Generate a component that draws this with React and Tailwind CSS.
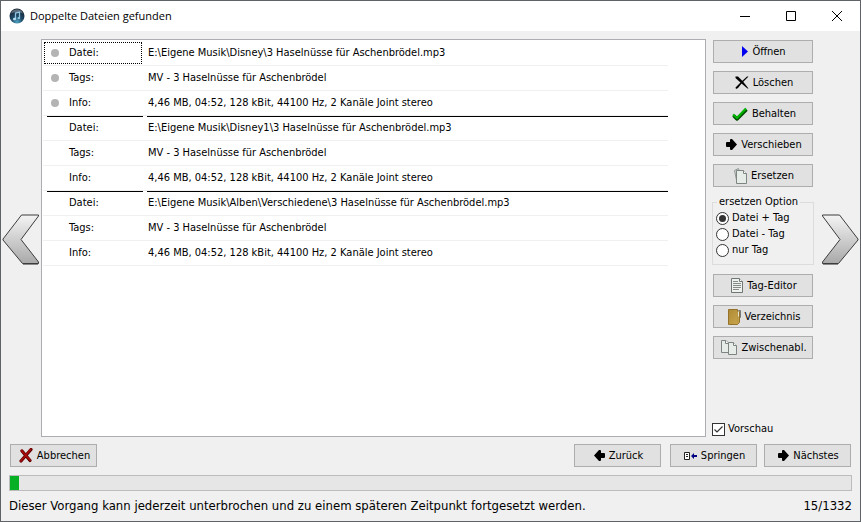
import { useState } from 'react';
import clsx from 'clsx';

const FILES = [
  {
    datei: 'E:\\Eigene Musik\\Disney\\3 Haselnüsse für Aschenbrödel.mp3',
    tags: 'MV - 3 Haselnüsse für Aschenbrödel',
    info: '4,46 MB, 04:52, 128 kBit, 44100 Hz, 2 Kanäle Joint stereo'
  },
  {
    datei: 'E:\\Eigene Musik\\Disney1\\3 Haselnüsse für Aschenbrödel.mp3',
    tags: 'MV - 3 Haselnüsse für Aschenbrödel',
    info: '4,46 MB, 04:52, 128 kBit, 44100 Hz, 2 Kanäle Joint stereo'
  },
  {
    datei: 'E:\\Eigene Musik\\Alben\\Verschiedene\\3 Haselnüsse für Aschenbrödel.mp3',
    tags: 'MV - 3 Haselnüsse für Aschenbrödel',
    info: '4,46 MB, 04:52, 128 kBit, 44100 Hz, 2 Kanäle Joint stereo'
  }
];

const FIELDS = [
  { key: 'datei', label: 'Datei:' },
  { key: 'tags', label: 'Tags:' },
  { key: 'info', label: 'Info:' }
];

const OPTIONS = ['Datei + Tag', 'Datei - Tag', 'nur Tag'];

const CURRENT = 15;
const TOTAL = 1332;

function AppIcon() {
  return (
    <svg width="16" height="16" viewBox="0 0 16 16" aria-hidden="true">
      <defs>
        <radialGradient id="orb" cx="0.5" cy="0.9" r="0.85">
          <stop offset="0" stopColor="#4fa3c4" />
          <stop offset="0.45" stopColor="#1f4a66" />
          <stop offset="1" stopColor="#16202e" />
        </radialGradient>
      </defs>
      <circle cx="8" cy="8" r="7.5" fill="url(#orb)" />
      <path d="M2 5.500C3 2.500 5.500 1.200 8 1.200s5 1.300 6 4.300C11 3.800 5 3.800 2 5.500z" fill="#8a97a5" opacity="0.6" />
      <path d="M6.500 11V5l4-1v6" fill="none" stroke="#8fc4e0" strokeWidth="1.300" />
      <ellipse cx="5.500" cy="11" rx="1.500" ry="1.200" fill="#b9ddf2" />
      <ellipse cx="9.800" cy="10.200" rx="1.300" ry="1.100" fill="#8fc4e0" />
    </svg>
  );
}

function PlayIcon() {
  return (
    <svg width="6" height="11" viewBox="0 0 6 11" aria-hidden="true">
      <path d="M0 0L6 5.500L0 11z" fill="#0000f0" />
    </svg>
  );
}

function CrossIcon() {
  return (
    <svg width="14" height="13" viewBox="0 0 14 13" aria-hidden="true">
      <path d="M0.500 0.500L3 0.500L8 5.500L13.500 12.500L12.500 12.500L6.500 7.500L0.500 2z" fill="#000" />
      <path d="M13.500 0.500L12 0.500L6 6L0.500 11.500L1 13L3 12L7 7z" fill="#000" />
    </svg>
  );
}

function TickIcon() {
  return (
    <svg width="16" height="14" viewBox="0 0 16 14" aria-hidden="true">
      <path d="M1.500 8.500L5 12L14.500 2.500" fill="none" stroke="#004a00" strokeWidth="3.400" strokeLinejoin="round" />
      <path d="M1 7.500L5 11L14 1.500" fill="none" stroke="#00b400" strokeWidth="2.200" strokeLinejoin="round" />
    </svg>
  );
}

function ArrowIcon({ flip }) {
  return (
    <svg width="11" height="11" viewBox="0 0 11 11" className={clsx(flip && '-scale-x-100')} aria-hidden="true">
      <path d="M0 4Q0 3 1 3H4V1Q4 0 5 0H6L11 5.500L6 11H5Q4 11 4 10V8H1Q0 8 0 7z" fill="#000" />
    </svg>
  );
}

function PagesIcon() {
  return (
    <svg width="13" height="16" viewBox="0 0 13 16" aria-hidden="true">
      <path d="M0.500 2.500L4.500 0.500L8 12L3 14.500z" fill="#d5dad6" stroke="#8f9693" />
      <path d="M2.500 2.500H9.500L12.500 5.500V15.500H2.500z" fill="#e6ece8" stroke="#7d8481" />
      <path d="M9.500 2.500V5.500H12.500" fill="#fff" stroke="#7d8481" />
    </svg>
  );
}

function DocumentIcon() {
  return (
    <svg width="12" height="15" viewBox="0 0 12 15" aria-hidden="true">
      <path d="M0.500 0.500H8.500L11.500 3.500V14.500H0.500z" fill="#eef1ee" stroke="#6f7673" />
      <path d="M8.500 0.500V3.500H11.500" fill="#fff" stroke="#6f7673" />
      <path d="M2 3.500H7M2 5.500H10M2 7.500H10M2 9.500H10M2 11.500H8" stroke="#858c88" />
    </svg>
  );
}

function FolderIcon() {
  return (
    <svg width="13" height="16" viewBox="0 0 13 16" aria-hidden="true">
      <defs>
        <linearGradient id="folder" x1="0" y1="0" x2="1" y2="1">
          <stop offset="0" stopColor="#b08a34" />
          <stop offset="1" stopColor="#c9a750" />
        </linearGradient>
      </defs>
      <path d="M10.500 1.500H12.500V8.500L10.500 10.500z" fill="#dcdcd6" stroke="#777" />
      <path d="M0.500 0.500H9.500V2.500H11.500V13.500L9.500 15.500H0.500z" fill="url(#folder)" stroke="#94722a" />
      <path d="M9.500 3V14" stroke="#b8953f" />
      <path d="M10.500 2.500V7.500" stroke="#e4e0d0" />
    </svg>
  );
}

function ClipboardIcon() {
  return (
    <svg width="16" height="15" viewBox="0 0 16 15" aria-hidden="true">
      <path d="M0.500 0.500H5L7.500 3V12.500H0.500z" fill="#e6ece8" stroke="#7d8481" />
      <path d="M4.500 0.500V3.500H7.500" fill="#fff" stroke="#7d8481" />
      <path d="M7.500 2.500H12.500L15.500 5.500V14.500H7.500z" fill="#e6ece8" stroke="#7d8481" />
      <path d="M12.500 2.500V5.500H15.500" fill="#fff" stroke="#7d8481" />
    </svg>
  );
}

function CancelIcon() {
  return (
    <svg width="14" height="15" viewBox="0 0 14 15" aria-hidden="true">
      <path d="M3 3L11 12.500M12 1.500L2 13" stroke="#5c0000" strokeWidth="3.200" strokeLinecap="round" />
      <path d="M2.500 2.500L11 12M11.500 1.500L2 13" stroke="#a80c0c" strokeWidth="1.800" strokeLinecap="round" />
    </svg>
  );
}

function JumpIcon() {
  return (
    <svg width="13" height="8" viewBox="0 0 13 8" aria-hidden="true">
      <path d="M0.500 0.500H5.500V7.500H0.500z" fill="#fff" stroke="#222" />
      <path d="M2 2.500H4M2 4.500H4" stroke="#222" />
      <path d="M7 4L10 1V3H13V5H10V7z" fill="#000080" />
    </svg>
  );
}

function BigArrow({ label, flip }) {
  return (
    <button type="button" aria-label={label} className="shrink-0">
      <svg width="38" height="51" viewBox="0 0 38 51" className={clsx(flip && '-scale-x-100')} aria-hidden="true">
        <defs>
          <linearGradient id="metal" x1="0" y1="0" x2="0" y2="1">
            <stop offset="0" stopColor="#f4f4f4" />
            <stop offset="1" stopColor="#a9a9a9" />
          </linearGradient>
        </defs>
        <path d="M19.500 1H36.500V2L19 25.500L36.500 48V49.500H20.500L1 26V25z" fill="url(#metal)" stroke="#3c3c3c" strokeLinejoin="round" />
        <path d="M21 50.500H36" stroke="#8a8a8a" />
      </svg>
    </button>
  );
}

function Button({ icon, className, children }) {
  return (
    <button
      type="button"
      className={clsx(
        'flex h-[23px] items-center justify-center gap-1 border border-[#adadad] bg-[#e1e1e1] pl-[2px] whitespace-nowrap hover:border-[#0078d7] hover:bg-[#e5f1fb]',
        className
      )}
    >
      {icon}
      {children}
    </button>
  );
}

function TitleBar() {
  return (
    <header className="flex h-[30px] shrink-0 items-center bg-white pl-2">
      <AppIcon />
      <h1 className="ml-[5px] flex-1 font-['Open_Sans','Noto_Sans',sans-serif] text-[11px]">Doppelte Dateien gefunden</h1>
      <button type="button" aria-label="Minimieren" className="flex h-full w-[46px] items-center justify-center">
        <svg width="10" height="10" viewBox="0 0 10 10">
          <path d="M0 5.500H10" stroke="#000" />
        </svg>
      </button>
      <button type="button" aria-label="Maximieren" className="flex h-full w-[46px] items-center justify-center">
        <svg width="10" height="10" viewBox="0 0 10 10">
          <path d="M0.500 0.500H9.500V9.500H0.500z" fill="none" stroke="#000" />
        </svg>
      </button>
      <button type="button" aria-label="Schließen" className="flex h-full w-[46px] items-center justify-center">
        <svg width="10" height="10" viewBox="0 0 10 10">
          <path d="M0 0L10 10M10 0L0 10" stroke="#000" />
        </svg>
      </button>
    </header>
  );
}

function DuplicateTable() {
  return (
    <table className="w-full max-w-[625px] table-fixed border-separate border-spacing-0">
      <colgroup>
        <col className="w-[102px]" />
        <col />
      </colgroup>
      <tbody>
        {FILES.map((file, fileIndex) =>
          FIELDS.map((field, fieldIndex) => {
            const startsGroup = fileIndex > 0 && fieldIndex === 0;
            const focused = fileIndex === 0 && fieldIndex === 0;
            return (
              <tr key={`${fileIndex}-${field.key}`}>
                <th className="border-b border-[#f0f0f0] p-0 pr-[2px] text-left font-normal">
                  <div
                    className={clsx(
                      'flex items-center',
                      focused ? 'm-px h-[22px] border border-dotted border-black pl-[6px]' : 'ml-1 h-6 pl-1',
                      startsGroup && 'border-t border-black pb-px'
                    )}
                  >
                    <span className={clsx('mr-[10px] size-2 rounded-full', fileIndex === 0 && 'bg-[#b4b4b4]')} />
                    {field.label}
                  </div>
                </th>
                <td className="border-b border-[#f0f0f0] p-0 pl-[2px]">
                  <div
                    className={clsx(
                      'flex h-6 items-center whitespace-nowrap pl-[1px]',
                      startsGroup && 'border-t border-black pb-px'
                    )}
                  >
                    {file[field.key]}
                  </div>
                </td>
              </tr>
            );
          })
        )}
      </tbody>
    </table>
  );
}

function ReplaceOptions() {
  const [selected, setSelected] = useState(OPTIONS[0]);

  return (
    <fieldset className="mt-2 border border-[#dcdcdc] px-[3px] pt-[1px] pb-[6px]">
      <legend className="ml-[1px] px-[2px] leading-[14px]">ersetzen Option</legend>
      {OPTIONS.map((option) => (
        <label key={option} className="flex h-4 items-center gap-[3px]">
          <input
            type="radio"
            name="ersetzen"
            checked={selected === option}
            onChange={() => setSelected(option)}
            className="flex size-[13px] appearance-none items-center justify-center rounded-full border border-[#333] bg-white before:size-[7px] before:rounded-full checked:before:bg-[#333]"
          />
          {option}
        </label>
      ))}
    </fieldset>
  );
}

export default function App() {
  const [preview, setPreview] = useState(true);

  return (
    <div className="flex min-h-screen flex-col border border-[#5f6368] bg-[#f0f0f0] font-['DejaVu_Sans_Condensed','DejaVu_Sans',sans-serif] text-[11px] leading-4 text-black">
      <TitleBar />

      <main className="mt-2 flex flex-1">
        <div className="flex w-10 shrink-0 items-center pt-[2px] pl-[1px]">
          <BigArrow label="Vorherige Gruppe" />
        </div>
        <section className="min-w-0 flex-1 border border-[#abadb3] bg-white p-[1px]">
          <DuplicateTable />
        </section>
        <aside className="ml-[6px] flex w-[102px] shrink-0 flex-col">
          <div className="flex flex-col gap-2 px-[1px] pt-[1px]">
            <Button icon={<PlayIcon />}>Öffnen</Button>
            <Button icon={<CrossIcon />}>Löschen</Button>
            <Button icon={<TickIcon />}>Behalten</Button>
            <Button icon={<ArrowIcon />}>Verschieben</Button>
            <Button icon={<PagesIcon />}>Ersetzen</Button>
          </div>
          <ReplaceOptions />
          <div className="mt-[9px] flex flex-col gap-2 px-[1px]">
            <Button icon={<DocumentIcon />}>Tag-Editor</Button>
            <Button icon={<FolderIcon />}>Verzeichnis</Button>
            <Button icon={<ClipboardIcon />}>Zwischenabl.</Button>
          </div>
          <label className="mt-auto flex items-center gap-[3px]">
            <span className="relative flex">
              <input
                type="checkbox"
                checked={preview}
                onChange={(event) => setPreview(event.target.checked)}
                className="peer size-[13px] appearance-none border border-[#333] bg-white"
              />
              <svg
                viewBox="0 0 13 13"
                className="pointer-events-none absolute inset-0 hidden size-[13px] peer-checked:block"
                aria-hidden="true"
              >
                <path d="M2.500 6.500L5 9L10.500 3.500" fill="none" stroke="#333" strokeWidth="1.200" />
              </svg>
            </span>
            Vorschau
          </label>
        </aside>
        <div className="flex w-[46px] shrink-0 items-center pt-[2px] pl-[7px]">
          <BigArrow label="Nächste Gruppe" flip />
        </div>
      </main>

      <footer className="px-2 pt-[7px]">
        <div className="flex px-[1px]">
          <Button icon={<CancelIcon />} className="w-[87px]">Abbrechen</Button>
          <Button icon={<ArrowIcon flip />} className="ml-auto w-[87px]">Zurück</Button>
          <Button icon={<JumpIcon />} className="ml-[9px] w-[87px]">Springen</Button>
          <Button icon={<ArrowIcon />} className="ml-[7px] w-[87px]">Nächstes</Button>
        </div>
        <div
          role="progressbar"
          aria-valuenow={CURRENT}
          aria-valuemax={TOTAL}
          className="mt-2 h-4 border border-[#bcbcbc] bg-[#e6e6e6]"
        >
          <div className="h-full bg-[#06b025]" style={{ width: `${(CURRENT / TOTAL) * 100}%` }} />
        </div>
        <div className="flex justify-between pt-[6px] pb-[6px] text-[13px] leading-[18px]">
          <p>Dieser Vorgang kann jederzeit unterbrochen und zu einem späteren Zeitpunkt fortgesetzt werden.</p>
          <p>
            {CURRENT}/{TOTAL}
          </p>
        </div>
      </footer>
    </div>
  );
}
